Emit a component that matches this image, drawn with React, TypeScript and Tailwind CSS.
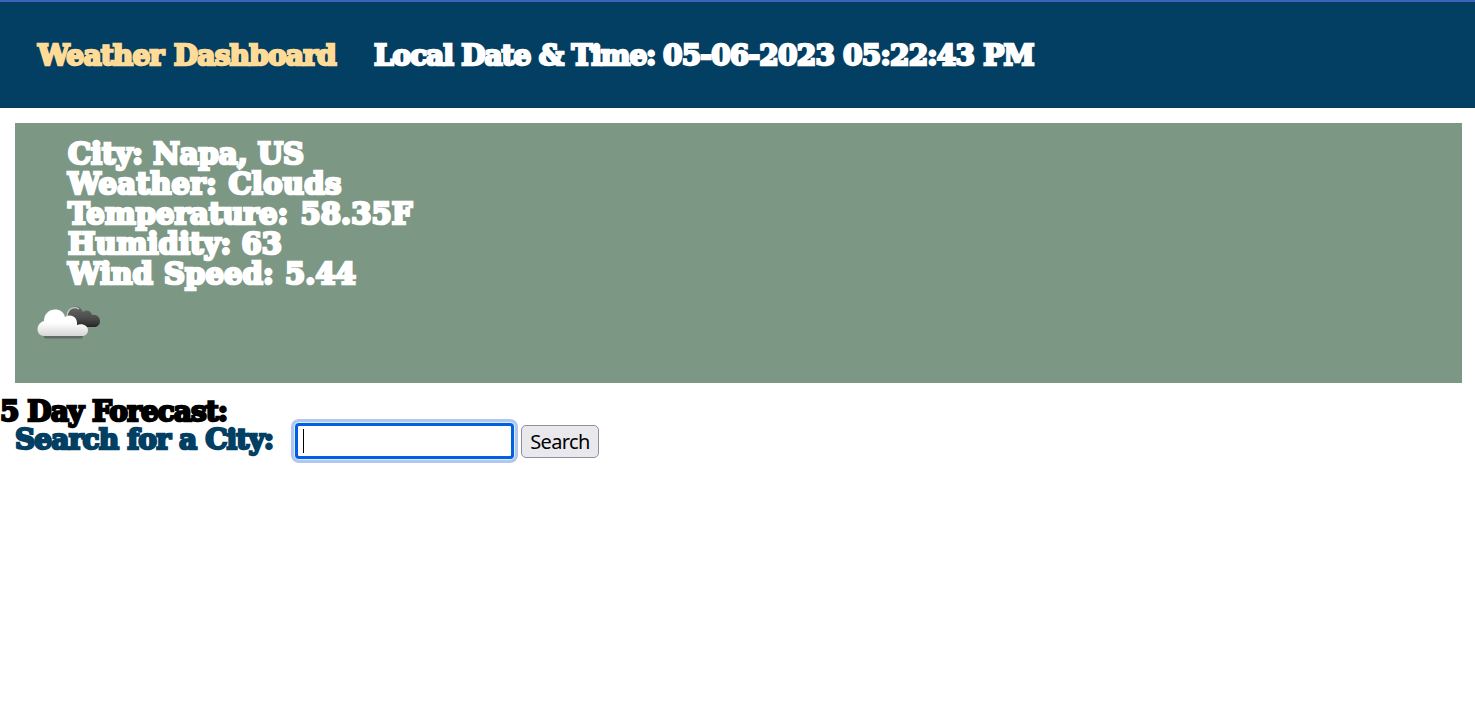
const readings = [
  { text: 'City: Napa, US', spacing: 'tracking-[0px]' },
  { text: 'Weather: Clouds', spacing: 'tracking-[0.33px] [word-spacing:1px]' },
  { text: 'Temperature: 58.35F', spacing: 'tracking-[0.1px] [word-spacing:2px]' },
  { text: 'Humidity: 63', spacing: 'tracking-[0.1px]' },
  { text: 'Wind Speed: 5.44', spacing: 'tracking-[0.1px] [word-spacing:1px]' },
];

function CloudIcon() {
  return (
    <svg width="64" height="34" viewBox="0 0 64 34" className="block" aria-hidden="true">
      <defs>
        <linearGradient id="front" x1="0" y1="0" x2="0" y2="1">
          <stop offset="0.5" stopColor="#ffffff" />
          <stop offset="1" stopColor="#d6d6d6" />
        </linearGradient>
        <linearGradient id="back" x1="0" y1="0" x2="0" y2="1">
          <stop offset="0" stopColor="#666666" />
          <stop offset="0.6" stopColor="#4a4a4a" />
          <stop offset="1" stopColor="#252525" />
        </linearGradient>
        <filter id="soft" x="-10%" y="-20%" width="120%" height="140%">
          <feGaussianBlur stdDeviation="0.7" />
        </filter>
      </defs>
      <g filter="url(#soft)">
        <path d="M36 21C30 19 29 10 32 5C35 -1 43 -1 46 6C50 3 54 5 55 9C60 8 63 12 63 15C63 19 60 21 57 21L46 21Z" fill="url(#back)" />
        <path d="M30 10C31 2 37 0 42 3" fill="none" stroke="#c8c8c8" strokeWidth="1.4" />
        <path d="M5 28H47L45 32.500H8Z" fill="#626a65" />
        <path d="M7 30C3 30 0.5 27 0.5 23C0.5 19 4 15.500 7 15C7 8 12 3.500 18 3.500C23 3.500 27 6 28 11C34 7 41 11 40 19C46 17 51 20 51 24C51 28 48 30 45 30Z" fill="url(#front)" />
      </g>
    </svg>
  );
}

export default function App() {
  return (
    <div className="min-h-[721px] bg-white font-['DejaVu_Serif',serif] text-[28px] font-bold leading-[30px] whitespace-nowrap">
      <header className="flex h-[108px] border-t-2 border-[#3b63bd] bg-[#033f63] pt-[39px] pl-[38px]">
        <h1 className="w-[336px] tracking-[-0.8px] [word-spacing:1.5px] text-[#fedc97] [-webkit-text-stroke:2.4px_#fedc97]">Weather Dashboard</h1>
        <p className="tracking-[-0.95px] text-white [-webkit-text-stroke:2.4px_#fff]">
          <span className="inline-block w-[289px] tracking-[-1.1px]">Local Date &amp; Time:</span>
          <span className="tracking-[-0.8px]">05-06-2023 05:22:43 PM</span>
        </p>
      </header>
      <main>
        <section className="mt-[15px] mr-[13px] ml-[15px] h-[260px] bg-[#7c9885] pt-[16px] text-[29px] text-white [-webkit-text-stroke:2.7px_#fff]">
          <ul className="pl-[53px]">
            {readings.map((r) => (
              <li key={r.text} className={r.spacing}>{r.text}</li>
            ))}
          </ul>
          <div className="pt-[17px] pl-[22px]">
            <CloudIcon />
          </div>
        </section>
        <h2 className="mt-[14px] h-[24px] tracking-[-0.95px] text-black [-webkit-text-stroke:2.4px_#000]">5 Day Forecast:</h2>
        <form className="flex pl-[15px]" onSubmit={(e) => e.preventDefault()}>
          <label htmlFor="city" className="w-[280px] pt-[4px] tracking-[-0.85px] text-[#033f63] [-webkit-text-stroke:2.4px_#033f63]">Search for a City:</label>
          <div className="mt-[2px] flex h-[36px] w-[219px] items-center rounded-[4px] border-[3px] border-[#0060df] bg-white pl-[5px] shadow-[0_0_0_1px_#dfe9f9,0_0_0_4px_#b0c8ee]">
            <span className="h-[24px] w-px bg-black" />
            <input id="city" className="w-[190px] font-['Noto_Sans',sans-serif] text-[20px] font-normal caret-transparent outline-none" />
          </div>
          <button className="mt-[4px] ml-[7px] h-[33px] w-[78px] rounded-[5px] border border-[#8f8f9d] bg-[#e9e9ed] font-['Noto_Sans',sans-serif] text-[20px] leading-[30px] font-normal tracking-[-0.6px] text-black">Search</button>
        </form>
      </main>
    </div>
  );
}
